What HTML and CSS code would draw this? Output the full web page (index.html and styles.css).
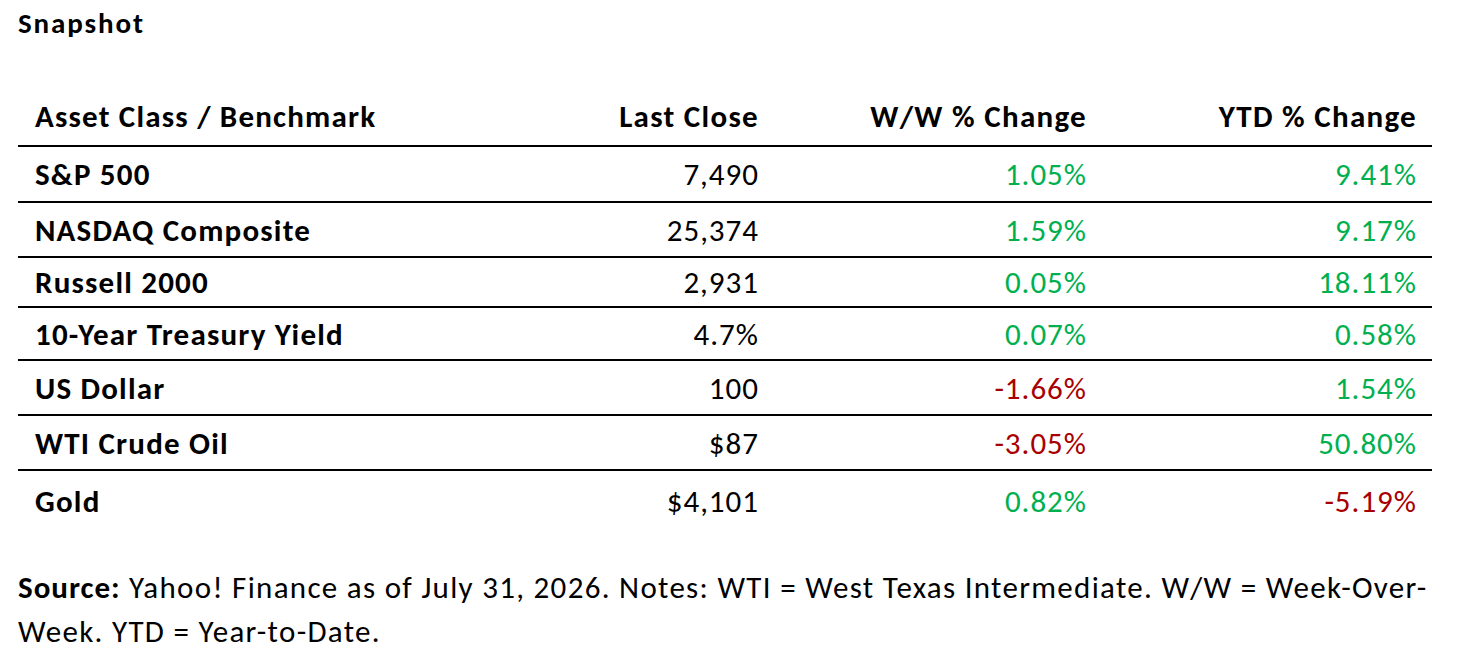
FILE: index.html
```html
<!DOCTYPE html>
<html lang="en">
<head>
<meta charset="utf-8">
<title>Snapshot</title>
<link rel="stylesheet" href="styles.css">
</head>
<body>
<div class="page">
  <h1 class="title">Snapshot</h1>
  <div class="table">
    <div class="row head">
      <div class="c name">Asset Class / Benchmark</div>
      <div class="c num">Last Close</div>
      <div class="c num">W/W % Change</div>
      <div class="c num">YTD % Change</div>
    </div>
    <div class="row r1">
      <div class="c name">S&amp;P 500</div>
      <div class="c num">7,490</div>
      <div class="c num pos">1.05%</div>
      <div class="c num pos">9.41%</div>
    </div>
    <div class="row r2">
      <div class="c name">NASDAQ Composite</div>
      <div class="c num">25,374</div>
      <div class="c num pos">1.59%</div>
      <div class="c num pos">9.17%</div>
    </div>
    <div class="row r3">
      <div class="c name">Russell 2000</div>
      <div class="c num">2,931</div>
      <div class="c num pos">0.05%</div>
      <div class="c num pos">18.11%</div>
    </div>
    <div class="row r4">
      <div class="c name">10-Year Treasury Yield</div>
      <div class="c num">4.7%</div>
      <div class="c num pos">0.07%</div>
      <div class="c num pos">0.58%</div>
    </div>
    <div class="row r5">
      <div class="c name">US Dollar</div>
      <div class="c num">100</div>
      <div class="c num neg">-1.66%</div>
      <div class="c num pos">1.54%</div>
    </div>
    <div class="row r6">
      <div class="c name">WTI Crude Oil</div>
      <div class="c num">$87</div>
      <div class="c num neg">-3.05%</div>
      <div class="c num pos">50.80%</div>
    </div>
    <div class="row r7 last">
      <div class="c name">Gold</div>
      <div class="c num">$4,101</div>
      <div class="c num pos">0.82%</div>
      <div class="c num neg">-5.19%</div>
    </div>
  </div>
  <p class="note"><b class="lead">Source:</b> Yahoo! Finance as of July 31, 2026. Notes: WTI = West Texas Intermediate. W/W = Week-Over-Week. YTD = Year-to-Date.</p>
</div>
</body>
</html>
```

FILE: styles.css
```css
html, body {
  margin: 0;
  padding: 0;
  background: #ffffff;
}
body {
  font-family: Carlito, Calibri, Lato, "Liberation Sans", sans-serif;
  color: #000000;
}
.page {
  width: 1414px;
  padding: 5px 0 0 18px;
}
.title {
  margin: 0;
  font-size: 29px;
  font-weight: 700;
  letter-spacing: 1.9px;
  line-height: 36px;
}
.table {
  margin-top: 50px;
  display: flex;
  flex-direction: column;
}
.row {
  display: grid;
  grid-template-columns: 418px 338px 328px 330px;
  align-items: center;
  border-bottom: 2px solid #000;
  font-size: 31px;
  line-height: 36px;
  letter-spacing: 1px;
}
.row.last {
  border-bottom: none;
}
.head {
  height: 56px;
  box-sizing: border-box;
  padding-bottom: 4px;
  font-weight: 700;
}
.r1 { height: 54px; }
.r2 { height: 53px; }
.r3 { height: 48px; }
.r4 { height: 51px; }
.r5 { height: 53px; }
.r6 { height: 53px; }
.r7 { height: 60px; }
.c {
  white-space: nowrap;
}
.name {
  padding-left: 17px;
  font-weight: 700;
  letter-spacing: 1.2px;
}
.head .num {
  letter-spacing: 1.3px;
}
.num {
  text-align: right;
  padding-right: 15px;
}
.pos { color: #00b050; }
.neg { color: #a80000; }
.note {
  margin: 34px 0 0 0;
  width: 1426px;
  font-size: 31px;
  line-height: 44px;
  letter-spacing: 1.3px;
}
.lead {
  letter-spacing: 1px;
}
```
